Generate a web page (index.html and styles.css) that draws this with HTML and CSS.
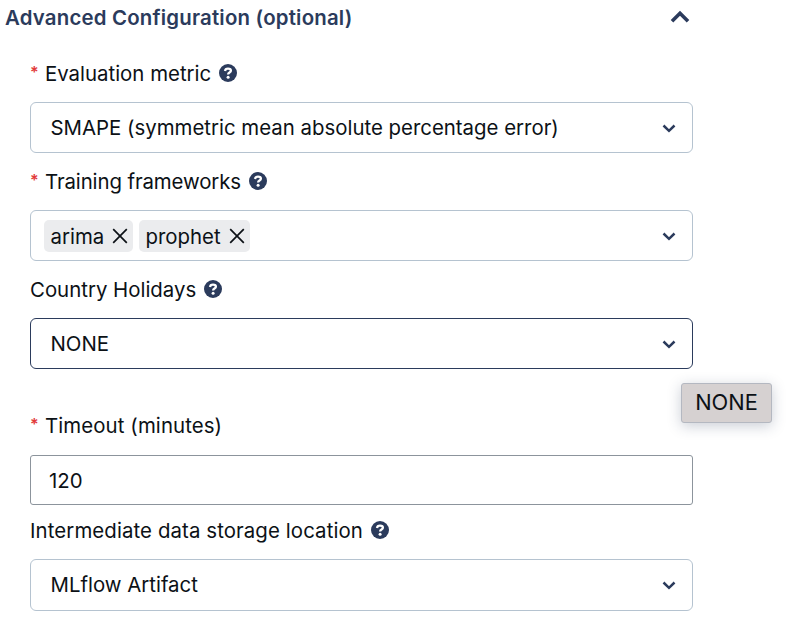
FILE: index.html
```html
<!DOCTYPE html>
<html lang="en">
<head>
<meta charset="utf-8">
<title>Advanced Configuration</title>
<link rel="stylesheet" href="styles.css">
</head>
<body>
<svg class="sprite" aria-hidden="true">
  <symbol id="help" viewBox="0 0 18 18"><circle cx="9" cy="9" r="9"/><path d="M6 7C6.200 5.200 7.300 4.600 9 4.600c1.800 0 2.900.8 2.900 2.100 0 1.900-2.800 1.700-2.800 3.700" fill="none" stroke="#fff" stroke-width="2.300"/><circle cx="9.100" cy="13.200" r="1.500" fill="#fff"/></symbol>
  <symbol id="chevron" viewBox="0 0 14 9"><path d="M1.500 1.500 7 6.800l5.500-5.300" fill="none" stroke="currentColor" stroke-width="2.500"/></symbol>
  <symbol id="close" viewBox="0 0 16 16"><path d="M1.200 1.200 14.800 14.800M14.800 1.200 1.200 14.800" fill="none" stroke="currentColor" stroke-width="1.700"/></symbol>
</svg>
<main class="panel">
  <header class="heading">
    <h1 class="title">Advanced Configuration (optional)</h1>
    <svg class="collapse" viewBox="0 0 20 14"><path d="M2 11.300 10 3.300l8 8" fill="none" stroke="currentColor" stroke-width="3.600"/></svg>
  </header>
  <form class="fields">
    <div class="label"><span class="required">*</span><span>Evaluation metric</span><svg class="help"><use href="#help"/></svg></div>
    <div class="control"><span>SMAPE (symmetric mean absolute percentage error)</span><svg class="chevron"><use href="#chevron"/></svg></div>

    <div class="label label-frameworks"><span class="required">*</span><span>Training frameworks</span><svg class="help"><use href="#help"/></svg></div>
    <div class="control tags">
      <span class="tag tag-arima"><span>arima</span><svg class="close"><use href="#close"/></svg></span>
      <span class="tag tag-prophet"><span>prophet</span><svg class="close"><use href="#close"/></svg></span>
      <svg class="chevron"><use href="#chevron"/></svg>
    </div>

    <div class="label"><span>Country Holidays</span><svg class="help"><use href="#help"/></svg></div>
    <div class="control focused"><span>NONE</span><svg class="chevron"><use href="#chevron"/></svg><span class="tooltip">NONE</span></div>

    <div class="label label-timeout"><span class="required">*</span><span>Timeout (minutes)</span></div>
    <div class="control input"><span>120</span></div>

    <div class="label label-storage"><span>Intermediate data storage location</span><svg class="help"><use href="#help"/></svg></div>
    <div class="control control-storage"><span>MLflow Artifact</span><svg class="chevron"><use href="#chevron"/></svg></div>
  </form>
</main>
</body>
</html>
```
FILE: styles.css
```css
* { box-sizing: border-box; }
body {
  margin: 0;
  background: #fff;
  color: #0c1116;
  font-family: Inter, "Liberation Sans", sans-serif;
  font-size: 20.4px;
  line-height: 26px;
  white-space: nowrap;
  overflow: hidden;
}
.sprite { position: absolute; width: 0; height: 0; }
.panel { width: 693px; }
.heading {
  display: flex;
  align-items: center;
  justify-content: space-between;
  height: 36px;
  padding: 0 3px 0 5px;
  color: #2b3b5c;
}
.title { margin: 0; font-size: 20.4px; font-weight: 600; line-height: 26px; letter-spacing: .2px; }
.collapse { width: 20px; height: 14px; margin-top: -2px; }
.fields { padding: 25px 0 0 30px; }
.label { display: flex; align-items: center; height: 26px; margin-bottom: 15px; }
.required { width: 15px; color: #e23b3b; font-size: 16px; font-weight: 600; line-height: 22px; height: 26px; }
.help { width: 18px; height: 18px; margin: -2px 0 0 8px; fill: #2b3b5c; }
.control {
  position: relative;
  display: flex;
  align-items: center;
  height: 51px;
  margin-bottom: 16px;
  padding: 0 16px 0 19.500px;
  border: 1px solid #b5c3d0;
  border-radius: 6px;
}
.chevron { width: 14px; height: 9px; margin: 1px 0 0 auto; color: #2b3b5c; }
.label-frameworks { letter-spacing: -.1px; }
.tags { gap: 6px; padding-left: 13px; }
.tag {
  display: flex;
  align-items: center;
  justify-content: space-between;
  height: 32px;
  padding: 2px 5px 0 6.500px;
  border-radius: 5px;
  background: #ebecee;
}
.tag-arima { width: 89px; }
.tag-prophet { width: 111px; }
.close { width: 16px; height: 16px; margin-top: -2px; }
.focused { border-color: #2b3b5c; }
.tooltip {
  position: absolute;
  left: 650px;
  top: 64px;
  width: 91px;
  height: 40px;
  line-height: 37px;
  font-size: 21.800px;
  text-align: center;
  border: 1px solid #b4b8c1;
  border-radius: 3px;
  background: #d6d1d1;
  box-shadow: 0 3px 14px rgba(43, 59, 92, .25);
}
.label-timeout { margin-top: 44px; margin-bottom: 16px; letter-spacing: .1px; }
.input { height: 50px; padding: 2px 16px 0 18px; border-color: #8c949c; border-radius: 3px; margin-bottom: 13px; }
.label-storage { margin-bottom: 15px; letter-spacing: .1px; }
.control-storage { height: 52px; margin-bottom: 0; }
```
